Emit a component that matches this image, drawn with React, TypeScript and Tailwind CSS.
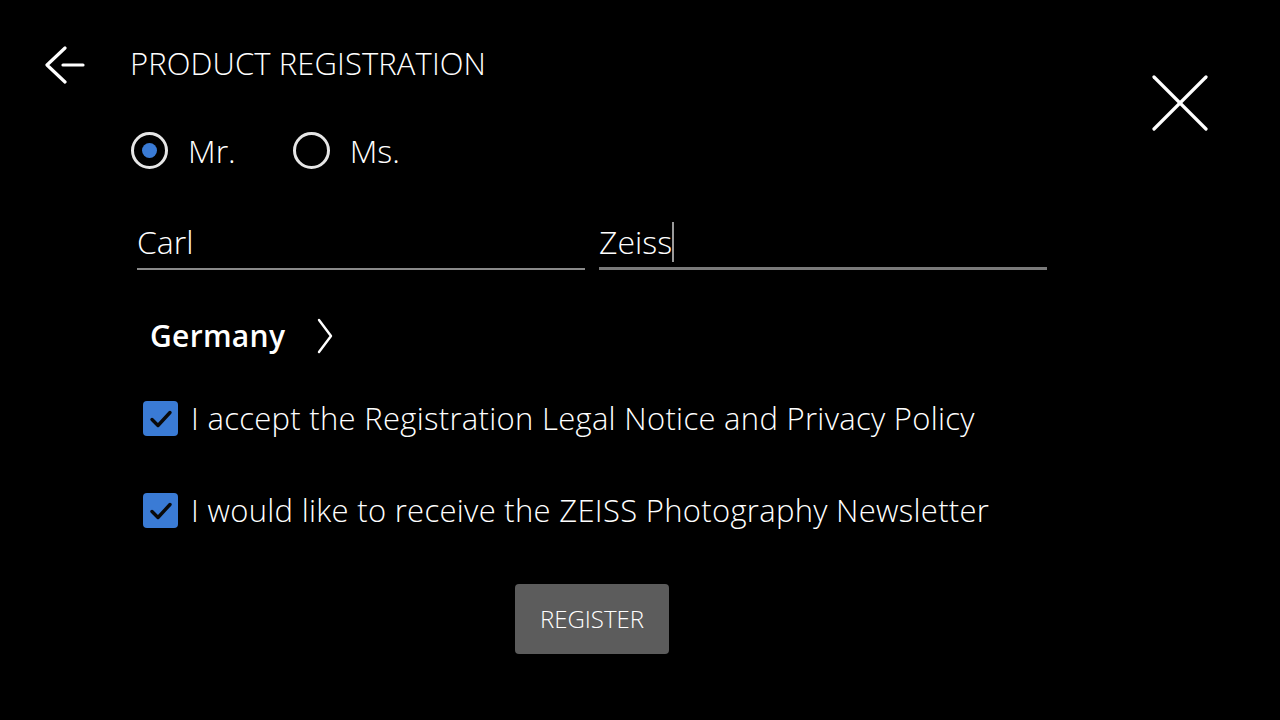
import { useState } from "react";

function BackArrow() {
  return (
    <svg width="40" height="38" viewBox="0 0 40 38" fill="none" stroke="white" strokeWidth="3.2" strokeLinecap="round" strokeLinejoin="round">
      <path d="M20 2L2 19L20 36" />
      <path d="M18 19H38" />
    </svg>
  );
}

function CloseIcon() {
  return (
    <svg width="56" height="56" viewBox="0 0 56 56" fill="none" stroke="white" strokeWidth="3.2" strokeLinecap="round">
      <path d="M2 2L54 54" />
      <path d="M54 2L2 54" />
    </svg>
  );
}

function Radio({ checked, label }: { checked: boolean; label: string }) {
  return (
    <div className="flex items-center gap-[20px]">
      <span className="flex h-[37px] w-[37px] items-center justify-center rounded-full border-[3px] border-[#e6e6e6]">
        {checked && <span className="h-[15px] w-[15px] rounded-full bg-[#3a7bd5]" />}
      </span>
      <span className="text-[32px] font-light leading-none text-white">{label}</span>
    </div>
  );
}

function Check({ label }: { label: string }) {
  return (
    <div className="flex items-center gap-[13px]">
      <span className="flex h-[35px] w-[35px] items-center justify-center rounded-[4px] bg-[#3a7bd5]">
        <svg width="24" height="20" viewBox="0 0 24 20" fill="none" stroke="#0a0a0a" strokeWidth="3.4" strokeLinecap="round" strokeLinejoin="round">
          <path d="M3 10.5L9 16.5L21 3.5" />
        </svg>
      </span>
      <span className="text-[31px] font-light leading-none tracking-[0.3px] text-white">{label}</span>
    </div>
  );
}

export default function App() {
  const [first] = useState("Carl");
  const [last] = useState("Zeiss");

  return (
    <div className="h-[720px] w-full overflow-hidden bg-black font-['Open_Sans',sans-serif] text-white">
      <div className="flex items-start justify-between pl-[45px] pr-[72px]">
        <div className="flex h-[130px] items-start pt-[46px]">
          <BackArrow />
          <h1 className="ml-[45px] mt-[-6px] text-[31px] font-light tracking-[0.1px]">PRODUCT REGISTRATION</h1>
        </div>
        <div className="pt-[75px]">
          <CloseIcon />
        </div>
      </div>

      <div className="mt-[1px] flex gap-[57px] pl-[131px]">
        <Radio checked label="Mr." />
        <Radio checked={false} label="Ms." />
      </div>

      <div className="mt-[53px] flex gap-[14px] pl-[137px]">
        <div className="w-[448px] border-b-2 border-[#8a8a8a] pb-[6px]">
          <span className="text-[32px] font-light leading-[40px]">{first}</span>
        </div>
        <div className="w-[448px] border-b-[3px] border-[#7a7a7a] pb-[5px]">
          <span className="text-[32px] font-light leading-[40px]">{last}</span>
          <span className="inline-block h-[40px] w-[2px] bg-[#9a9a9a] align-top" />
        </div>
      </div>

      <div className="mt-[48px] flex items-center gap-[31px] pl-[150px]">
        <span className="text-[30px] font-semibold leading-none tracking-[0.3px]">Germany</span>
        <svg width="18" height="36" viewBox="0 0 18 36" fill="none" stroke="white" strokeWidth="2.4" strokeLinecap="round" strokeLinejoin="round">
          <path d="M3 2L15 18L3 34" />
        </svg>
      </div>

      <div className="mt-[47px] flex flex-col gap-[57px] pl-[143px]">
        <Check label="I accept the Registration Legal Notice and Privacy Policy" />
        <Check label="I would like to receive the ZEISS Photography Newsletter" />
      </div>

      <div className="mt-[56px] flex pl-[515px]">
        <button className="h-[70px] w-[154px] rounded-[4px] bg-[#5c5c5c] text-[24px] font-light text-white">REGISTER</button>
      </div>
    </div>
  );
}
